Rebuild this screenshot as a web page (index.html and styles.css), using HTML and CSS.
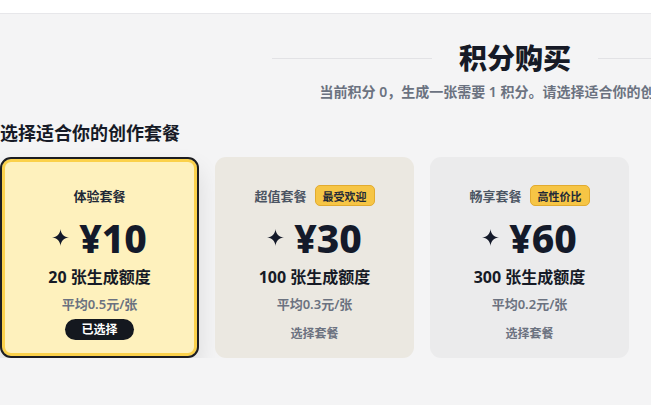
FILE: index.html
```html
<!DOCTYPE html>
<html lang="zh-CN">
<head>
    <meta charset="UTF-8">
    <meta name="viewport" content="width=device-width, initial-scale=1.0">
    <title>积分购买</title>
    <link rel="stylesheet" href="styles.css">
</head>
<body>
    <div class="topbar"></div>
    <div class="page">
        <div class="title-row">
            <span class="title-line"></span>
            <h1>积分购买</h1>
            <span class="title-line"></span>
        </div>
        <p class="subtitle">当前积分 0，生成一张需要 1 积分。请选择适合你的创作套餐。</p>
        <h2>选择适合你的创作套餐</h2>
        <div class="plans">
            <div class="plan selected">
                <div class="plan-name"><span>体验套餐</span></div>
                <div class="price">
                    <svg class="spark" viewBox="0 0 24 24"><path d="M12 0C12.5 7 17 11.5 24 12C17 12.5 12.5 17 12 24C11.5 17 7 12.5 0 12C7 11.5 11.5 7 12 0Z"/></svg>
                    <span>¥10</span>
                </div>
                <div class="quota">20 张生成额度</div>
                <div class="avg">平均0.5元/张</div>
                <div class="action"><button class="chosen">已选择</button></div>
            </div>
            <div class="plan value">
                <div class="plan-name"><span>超值套餐</span><span class="badge">最受欢迎</span></div>
                <div class="price">
                    <svg class="spark" viewBox="0 0 24 24"><path d="M12 0C12.5 7 17 11.5 24 12C17 12.5 12.5 17 12 24C11.5 17 7 12.5 0 12C7 11.5 11.5 7 12 0Z"/></svg>
                    <span>¥30</span>
                </div>
                <div class="quota">100 张生成额度</div>
                <div class="avg">平均0.3元/张</div>
                <div class="action"><button class="pick">选择套餐</button></div>
            </div>
            <div class="plan">
                <div class="plan-name"><span>畅享套餐</span><span class="badge">高性价比</span></div>
                <div class="price">
                    <svg class="spark" viewBox="0 0 24 24"><path d="M12 0C12.5 7 17 11.5 24 12C17 12.5 12.5 17 12 24C11.5 17 7 12.5 0 12C7 11.5 11.5 7 12 0Z"/></svg>
                    <span>¥60</span>
                </div>
                <div class="quota">300 张生成额度</div>
                <div class="avg">平均0.2元/张</div>
                <div class="action"><button class="pick">选择套餐</button></div>
            </div>
        </div>
    </div>
</body>
</html>
```

FILE: styles.css
```css
html, body {
    overflow: hidden;
}
body {
    margin: 0;
    font-family: "Noto Sans", "Noto Sans CJK SC", sans-serif;
    background-color: #f4f4f5;
    color: #111827;
}
.topbar {
    height: 13px;
    background: #fff;
    border-bottom: 1px solid #e7e7ea;
}
.page {
    width: 1030px;
}
.title-row {
    display: flex;
    justify-content: center;
    align-items: center;
    gap: 27px;
    margin-top: 27px;
}
.title-line {
    width: 160px;
    height: 1px;
    background: #e2e2e5;
}
h1 {
    margin: 0;
    font-size: 28px;
    line-height: 34px;
    font-weight: 800;
    color: #161a26;
}
.subtitle {
    margin: 7px 0 0;
    text-align: center;
    font-size: 14px;
    line-height: 20px;
    font-weight: 600;
    color: #6b7280;
}
h2 {
    margin: 18px 0 0;
    font-size: 18px;
    line-height: 26px;
    font-weight: 700;
    color: #161a26;
}
.plans {
    display: flex;
    gap: 16px;
    margin-top: 11px;
}
.plan {
    box-sizing: border-box;
    width: 199px;
    height: 201px;
    padding-top: 26px;
    border: 2px solid transparent;
    border-radius: 11px;
    background: #ebebec;
    display: flex;
    flex-direction: column;
    align-items: center;
}
.plan.value {
    background: #ebe8e1;
}
.plan.selected {
    background: #fef1bd;
    border-color: #1c1d21;
    box-shadow: inset 0 0 0 3px #fbd14b, 0 12px 24px rgba(0, 0, 0, 0.11);
}
.plan-name {
    height: 21px;
    display: flex;
    align-items: center;
    gap: 8px;
    font-size: 13px;
    font-weight: 600;
    color: #4b5563;
}
.selected .plan-name {
    color: #1f2937;
}
.badge {
    height: 19px;
    padding: 0 7px;
    display: flex;
    align-items: center;
    background: #f6c545;
    border: 1px solid #e2ab2f;
    border-radius: 5px;
    font-size: 11px;
    font-weight: 700;
    color: #1f2937;
}
.price {
    display: flex;
    align-items: center;
    gap: 10px;
    margin-top: 9px;
    height: 44px;
    font-size: 39px;
    font-weight: 800;
    color: #141a2a;
}
.spark {
    width: 17px;
    height: 17px;
    fill: #141a2a;
}
.quota {
    margin-top: 7px;
    font-size: 16px;
    line-height: 22px;
    font-weight: 700;
    color: #161a26;
}
.avg {
    margin-top: 7px;
    font-size: 13px;
    line-height: 18px;
    font-weight: 600;
    color: #6b7280;
}
.action {
    margin-top: 4px;
}
button {
    font-family: inherit;
    border: none;
    cursor: pointer;
}
.chosen {
    height: 21px;
    padding: 0 16px;
    border-radius: 11px;
    background: #14181f;
    color: #fff;
    font-size: 12px;
    font-weight: 700;
}
.pick {
    height: 32px;
    padding: 0 14px;
    background: none;
    color: #6b7280;
    font-size: 12px;
    font-weight: 600;
}
```
